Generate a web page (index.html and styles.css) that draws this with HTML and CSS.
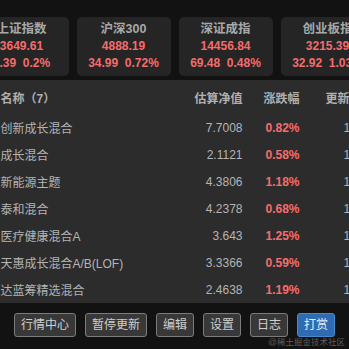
FILE: index.html
```html
<!DOCTYPE html>
<html lang="zh">
<head>
<meta charset="utf-8">
<link rel="stylesheet" href="styles.css">
</head>
<body>
<div class="page">
  <div class="wrap">
    <div class="cards">
      <div class="card"><div class="c-title">上证指数</div><div class="c-val">3649.61</div><div class="c-chg">7.39&nbsp;&nbsp;0.2%</div></div>
      <div class="card"><div class="c-title">沪深300</div><div class="c-val">4888.19</div><div class="c-chg">34.99&nbsp;&nbsp;0.72%</div></div>
      <div class="card"><div class="c-title">深证成指</div><div class="c-val">14456.84</div><div class="c-chg">69.48&nbsp;&nbsp;0.48%</div></div>
      <div class="card"><div class="c-title">创业板指</div><div class="c-val">3215.39</div><div class="c-chg">32.92&nbsp;&nbsp;1.03%</div></div>
    </div>
    <div class="table">
      <div class="row head"><div>名称（7）</div><div class="r">估算净值</div><div class="r">涨跌幅</div><div class="up">更新时间</div></div>
      <div class="row"><div>创新成长混合</div><div class="r">7.7008</div><div class="r red">0.82%</div><div class="r">15:00</div></div>
      <div class="row"><div>成长混合</div><div class="r">2.1121</div><div class="r red">0.58%</div><div class="r">15:00</div></div>
      <div class="row"><div>新能源主题</div><div class="r">4.3806</div><div class="r red">1.18%</div><div class="r">15:00</div></div>
      <div class="row"><div>泰和混合</div><div class="r">4.2378</div><div class="r red">0.68%</div><div class="r">15:00</div></div>
      <div class="row"><div>医疗健康混合A</div><div class="r">3.643</div><div class="r red">1.25%</div><div class="r">15:00</div></div>
      <div class="row"><div>天惠成长混合A/B(LOF)</div><div class="r">3.3366</div><div class="r red">0.59%</div><div class="r">15:00</div></div>
      <div class="row"><div>达蓝筹精选混合</div><div class="r">2.4638</div><div class="r red">1.19%</div><div class="r">15:00</div></div>
    </div>
  </div>
  <div class="btns">
    <span class="btn">行情中心</span>
    <span class="btn">暂停更新</span>
    <span class="btn">编辑</span>
    <span class="btn">设置</span>
    <span class="btn">日志</span>
    <span class="btn primary">打赏</span>
  </div>
  <div class="mark">@稀土掘金技术社区</div>
</div>
</body>
</html>
```
FILE: styles.css
```css
html, body {
  margin: 0;
  padding: 0;
  background: #121212;
  overflow: hidden;
}
body {
  width: 349px;
  height: 349px;
  font-family: "Liberation Sans", Arial, "Noto Sans CJK SC", sans-serif;
  font-size: 12px;
}
.page {
  position: relative;
  width: 349px;
  height: 349px;
  display: flex;
  flex-direction: column;
  align-items: center;
}
.wrap {
  width: 400px;
  flex-shrink: 0;
}
.cards {
  display: flex;
  gap: 8px;
  padding-top: 17px;
  padding-bottom: 4px;
}
.card {
  width: 94px;
  height: 59px;
  box-sizing: border-box;
  padding: 4px 0;
  background: #252525;
  border-radius: 5px;
  text-align: center;
  line-height: 17px;
  font-weight: bold;
  white-space: nowrap;
}
.c-title {
  color: #a8a8a8;
  font-size: 12.5px;
}
.c-val, .c-chg {
  color: #f56c6c;
}
.table {
  background: #2c2c2c;
  padding: 0 1px 0 26px;
}
.row {
  display: grid;
  grid-template-columns: 186px 56px 57px 74px;
  height: 27px;
  align-items: center;
  color: #b4b4b4;
  white-space: nowrap;
}
.row.head {
  height: 34px;
  font-weight: bold;
  color: #b0b0b0;
}
.r { text-align: right; }
.up { padding-left: 26px; }
.red { color: #f56c6c; font-weight: bold; }
.btns {
  display: flex;
  gap: 9px;
  margin-top: 10px;
}
.btn {
  height: 24px;
  line-height: 22px;
  box-sizing: border-box;
  padding: 0 6px;
  border: 1px solid #7c7c7c;
  border-radius: 3px;
  background: #383838;
  color: #cfcfcf;
  font-size: 12px;
}
.btn.primary {
  background: #2e6bb2;
  border-color: #4a88cc;
  color: #e8eef6;
}
.mark {
  position: absolute;
  right: 4px;
  bottom: 2px;
  font-size: 8.5px;
  color: #5e5e5e;
}
```
